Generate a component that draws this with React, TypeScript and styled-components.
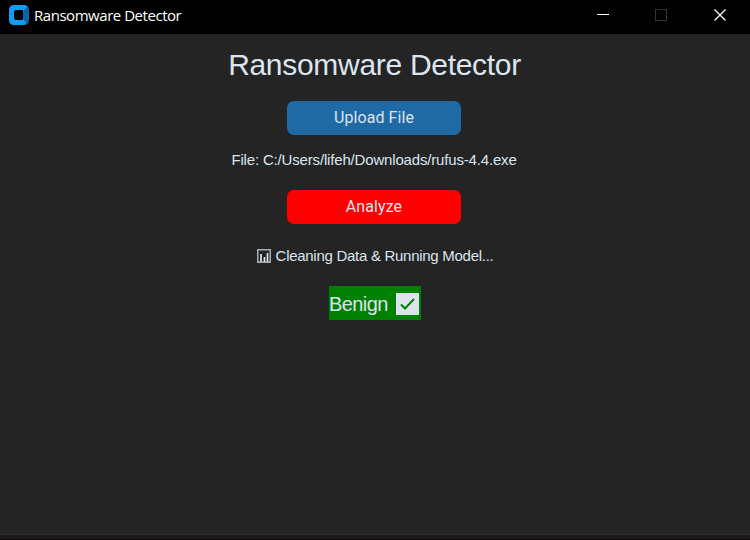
import React from "react";
import styled, { createGlobalStyle } from "styled-components";

const GlobalStyle = createGlobalStyle`
  * { box-sizing: border-box; }
  body { margin: 0; background: #242424; }
`;

const Window = styled.div`
  width: 750px;
  height: 540px;
  display: flex;
  flex-direction: column;
  overflow: hidden;
  background: #242424;
  font-family: "Liberation Sans", Arial, sans-serif;
  color: #dce4ee;
`;

const TitleBar = styled.header`
  height: 34px;
  flex: none;
  display: flex;
  align-items: flex-start;
  background: #000;
  padding-left: 9px;
`;

const AppIcon = styled.svg`
  width: 20px;
  height: 20px;
  margin-top: 5px;
  flex: none;
`;

const WindowTitle = styled.span`
  flex: 1;
  margin: 4px 0 0 5px;
  font-family: "Open Sans", "Noto Sans", sans-serif;
  font-size: 15px;
  line-height: 22px;
  letter-spacing: -0.46px;
  white-space: nowrap;
  color: #fff;
`;

const Controls = styled.div`
  display: flex;
  padding-right: 1px;
`;

const Control = styled.button`
  width: 58px;
  height: 30px;
  padding: 0;
  border: 0;
  background: none;
  display: flex;
  align-items: center;
  justify-content: center;
  color: #fff;
  &:disabled { color: #333; }
  &:last-child { margin-left: 1px; }
`;

const Content = styled.main`
  flex: 1;
  display: flex;
  flex-direction: column;
  align-items: center;
`;

const Heading = styled.h1`
  margin: 13px 1px 0 0;
  font-size: 30px;
  line-height: 36px;
  font-weight: 400;
  letter-spacing: -0.3px;
`;

const ActionButton = styled.button<{ $color: string; $gap: number }>`
  width: 174px;
  height: 34px;
  margin: ${(p) => p.$gap}px 2px 0 0;
  padding: 0;
  border: 0;
  border-radius: 7px;
  background: ${(p) => p.$color};
  color: #dce4ee;
  font: 16px/34px Roboto, sans-serif;
  letter-spacing: 0.08px;
`;

const InfoLine = styled.p<{ $gap: number; $spacing: number; $end?: number }>`
  display: flex;
  align-items: center;
  margin: ${(p) => p.$gap}px ${(p) => p.$end ?? 0}px 0 0;
  height: 18px;
  font-size: 15px;
  line-height: 18px;
  letter-spacing: ${(p) => p.$spacing}px;
  white-space: nowrap;
`;

const ChartIcon = styled.svg`
  width: 14px;
  height: 14px;
  margin-right: 5px;
`;

const Verdict = styled.div`
  width: 92px;
  height: 34px;
  margin-top: 21px;
  padding: 2px 2px 0 0;
  display: flex;
  align-items: center;
  justify-content: space-between;
  background: #008000;
  font-size: 20px;
  line-height: 32px;
  letter-spacing: -0.6px;
`;

const CheckIcon = styled.svg`
  width: 23px;
  height: 22px;
  margin-bottom: 1px;
`;

const StatusEdge = styled.footer`
  height: 6px;
  flex: none;
  background: #181818;
  border-top: 1px solid #303030;
  border-bottom: 1px solid #0c0709;
`;

export default function App() {
  return (
    <Window>
      <GlobalStyle />
      <TitleBar>
        <AppIcon viewBox="0 0 20 20">
          <path d="M14 0h1.5A4.5 4.5 0 0 1 20 4.500v11a4.500 4.500 0 0 1-4.500 4.500H14z" fill="#0b62a8" />
          <path
            fill="#129cf3"
            fillRule="evenodd"
            d="M4.500 0H15q3 0 3 2.500L15 5v10l2 3q-1 2-3 2H4.500A4.500 4.500 0 0 1 0 15.500v-11A4.500 4.500 0 0 1 4.500 0zM7 5Q5 5 5 7v6q0 2 2 2h6q2 0 2-2V7q0-2-2-2z"
          />
        </AppIcon>
        <WindowTitle>Ransomware Detector</WindowTitle>
        <Controls>
          <Control aria-label="Minimize">
            <svg width="12" height="12" shapeRendering="crispEdges">
              <path d="M0 5.500h12" stroke="currentColor" />
            </svg>
          </Control>
          <Control aria-label="Maximize" disabled>
            <svg width="12" height="12" shapeRendering="crispEdges">
              <rect x=".5" y=".5" width="11" height="11" fill="none" stroke="currentColor" />
            </svg>
          </Control>
          <Control aria-label="Close">
            <svg width="12" height="12">
              <path d="M.5.5l11 11M11.500.5l-11 11" stroke="currentColor" strokeWidth="1.3" />
            </svg>
          </Control>
        </Controls>
      </TitleBar>
      <Content>
        <Heading>Ransomware Detector</Heading>
        <ActionButton $color="#1f6aa5" $gap={18}>Upload File</ActionButton>
        <InfoLine $gap={16} $spacing={-0.17} $end={2}>File: C:/Users/lifeh/Downloads/rufus-4.4.exe</InfoLine>
        <ActionButton $color="#ff0000" $gap={21}>Analyze</ActionButton>
        <InfoLine $gap={23} $spacing={-0.28}>
          <ChartIcon viewBox="0 0 14 14">
            <path
              d="M.75.75h12.500v12.500H.75z"
              fill="none"
              stroke="#a5adb5"
              strokeWidth="1.500"
            />
            <path d="M4 13V5M7.500 13V8M10.500 13V4" stroke="#dce4ee" strokeWidth="1.700" />
          </ChartIcon>
          Cleaning Data &amp; Running Model...
        </InfoLine>
        <Verdict>
          Benign
          <CheckIcon viewBox="0 0 23 22">
            <path d="M0 0h23v22H0z" fill="#dce4ee" />
            <path d="M5 11.500l4 4L18 6" fill="none" stroke="#008000" strokeWidth="2" />
          </CheckIcon>
        </Verdict>
      </Content>
      <StatusEdge />
    </Window>
  );
}
